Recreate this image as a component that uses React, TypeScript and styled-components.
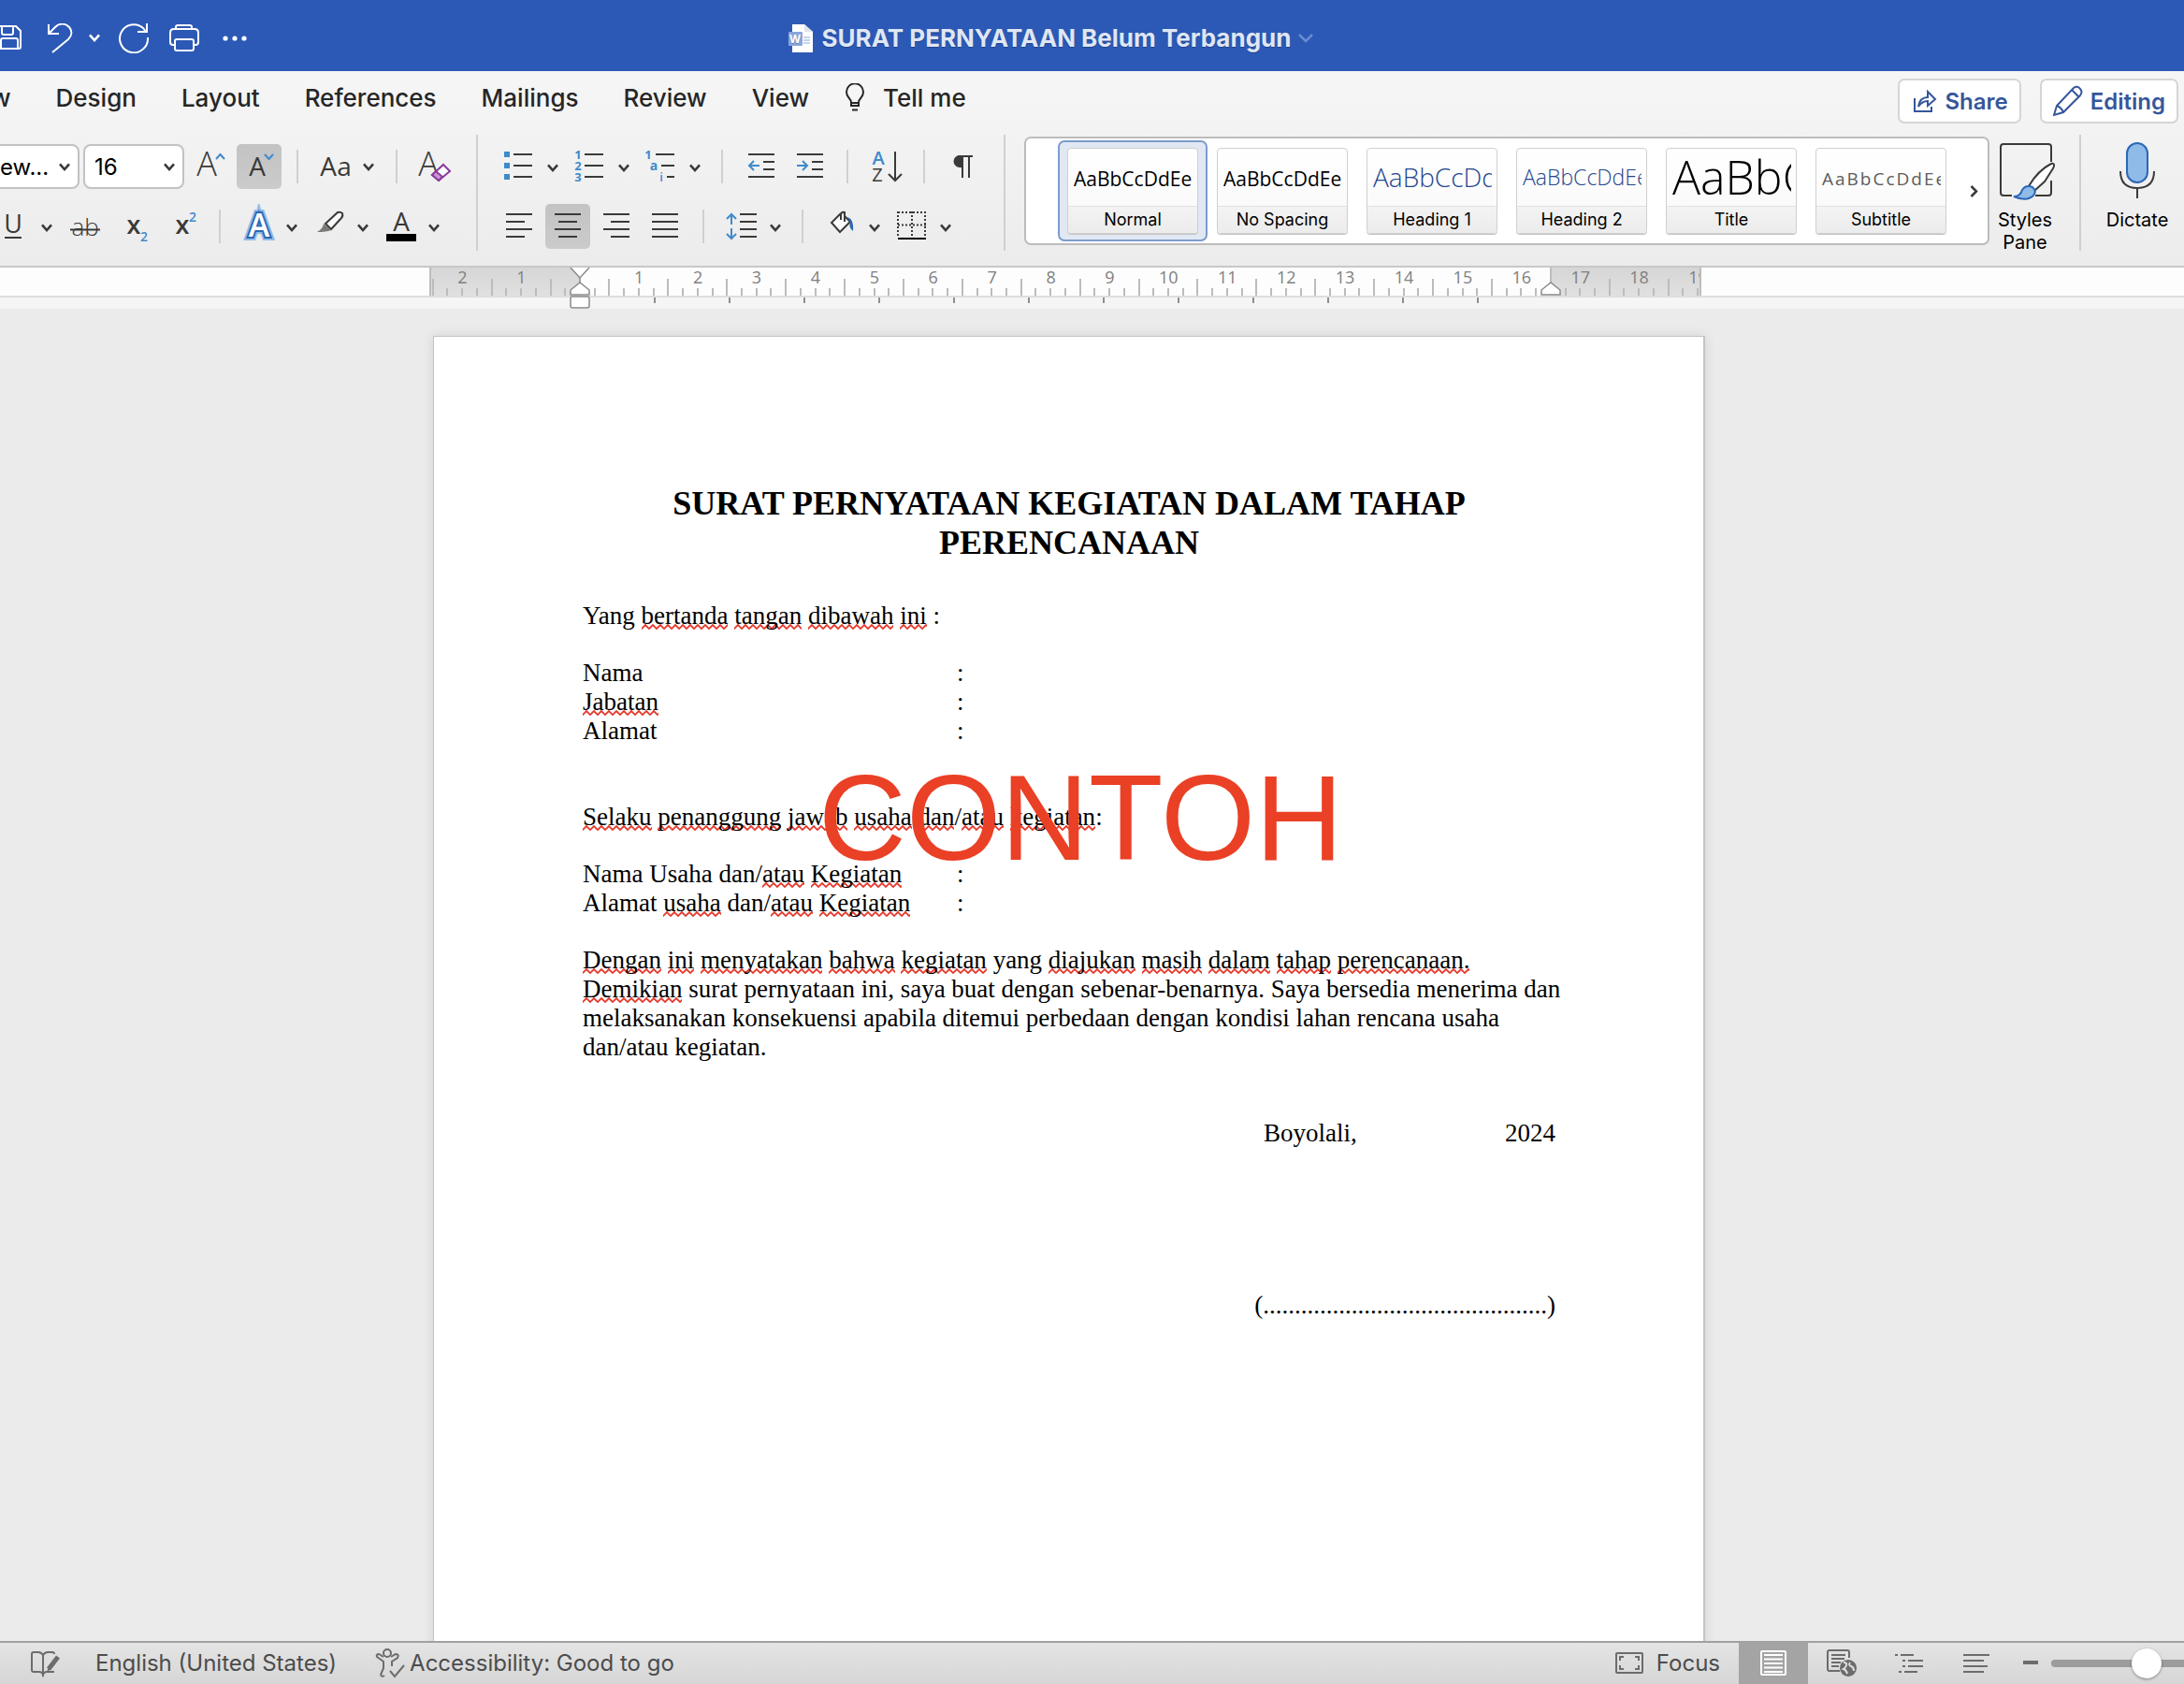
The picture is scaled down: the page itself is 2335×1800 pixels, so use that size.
import React from "react";
import styled, { createGlobalStyle } from "styled-components";

const UI = `Inter, "Liberation Sans", sans-serif`;
const SERIF = `"Liberation Serif", "Times New Roman", serif`;
const SAMPLE = `"Open Sans", "Noto Sans", sans-serif`;

const INK = "#3a3a38";
const BLUE = "#3f8acb";
const NAVY = "#35569b";

const GlobalStyle = createGlobalStyle`
  *, *::before, *::after { box-sizing: border-box; }
  body { margin: 0; background: #ebebeb; font-family: ${UI}; overflow: hidden; }
  button, select, input { font: inherit; color: inherit; margin: 0; }
  button { padding: 0; border: 0; background: none; }
  svg { display: block; flex: none; }
`;

const Window = styled.div`
  display: flex;
  flex-direction: column;
  height: 100vh;
  overflow: hidden;
`;

/* ---------- title bar ---------- */

const TitleBar = styled.header`
  display: grid;
  grid-template-columns: 1fr auto 1fr;
  align-items: center;
  height: 76px;
  padding: 5px 90px 0 0;
  flex: none;
  background: #2c59b6;
  color: #fff;
`;

const QuickTools = styled.div`
  display: flex;
  align-items: center;
  gap: 20px;
  margin-left: -6px;
`;

const UndoGroup = styled.div`
  display: flex;
  align-items: center;
  gap: 17px;
`;

const PlainButton = styled.button`
  display: flex;
  align-items: center;
  justify-content: center;
`;

const DocTitle = styled.h1`
  display: flex;
  align-items: center;
  margin: 0;
  gap: 8px;
  font-size: 26px;
  line-height: 32px;
  font-weight: 700;
  color: #dfe6f4;
  text-shadow: 0 1px 1px rgba(0, 0, 0, 0.25);
`;

/* ---------- ribbon ---------- */

const Ribbon = styled.section`
  flex: none;
  background: linear-gradient(#f6f6f6, #ececec);
  border-bottom: 2px solid #c8c8c8;
`;

const TabRow = styled.div`
  display: flex;
  align-items: flex-start;
  justify-content: space-between;
  padding: 8px 6px 0 0;
`;

const Tabs = styled.nav`
  display: flex;
  margin-left: -34px;
`;

const Tab = styled.button<{ $lead?: number }>`
  display: flex;
  align-items: center;
  gap: 20px;
  padding: 0 24px 0 ${(p) => p.$lead ?? 24}px;
  font-size: 26px;
  line-height: 42px;
  font-weight: 500;
  color: #262626;
`;

const Actions = styled.div`
  display: flex;
  gap: 20px;
`;

const ActionButton = styled.button`
  display: flex;
  align-items: center;
  justify-content: center;
  gap: 8px;
  height: 48px;
  padding: 0 12px;
  border: 2px solid #d5d5d5;
  border-radius: 7px;
  background: #fff;
  color: ${NAVY};
  font-size: 24px;
  font-weight: 600;
`;

const RibbonBody = styled.div`
  display: flex;
  align-items: flex-start;
  padding: 12px 10px 13px 0;
`;

const Group = styled.div`
  display: flex;
  flex-direction: column;
  gap: 16px;
  padding: 10px 20px 0 0;
`;

const ToolRow = styled.div<{ $pull?: boolean }>`
  display: flex;
  align-items: center;
  height: 48px;
  gap: 4px;
  margin-left: ${(p) => (p.$pull ? "-10px" : "0")};
`;

const GroupRule = styled.div`
  width: 2px;
  height: 124px;
  margin-right: 20px;
  flex: none;
  background: #d0d0d0;
`;

const Rule = styled.div`
  width: 2px;
  height: 36px;
  margin: 0 12px;
  background: #d0d0d0;
`;

const Tool = styled.button<{ $wide?: boolean; $on?: boolean }>`
  display: flex;
  align-items: center;
  justify-content: center;
  gap: 12px;
  width: ${(p) => (p.$wide ? 72 : 48)}px;
  height: 48px;
  border-radius: 5px;
  background: ${(p) => (p.$on ? "linear-gradient(#c3c3c3, #cbcbcb)" : "none")};
`;

const Split = styled.div`
  display: flex;
`;

const DropButton = styled.button`
  display: flex;
  align-items: center;
  justify-content: center;
  width: 24px;
  height: 48px;
  padding-top: 2px;
`;

const SelectBox = styled.label<{ $cut?: boolean }>`
  display: grid;
  grid-template-columns: 1fr 20px;
  align-items: center;
  width: ${(p) => (p.$cut ? 85 : 108)}px;
  height: 48px;
  border: 2px solid #c2c2c2;
  border-left-width: ${(p) => (p.$cut ? 0 : 2)}px;
  border-radius: ${(p) => (p.$cut ? "0 8px 8px 0" : "8px")};
  background: #fff;

  select {
    grid-area: 1 / 1 / 2 / 3;
    appearance: none;
    width: 100%;
    height: 44px;
    padding: 0 0 0 ${(p) => (p.$cut ? 0 : 10)}px;
    border: 0;
    background: none;
    font-size: 24px;
    color: #000;
  }

  svg {
    grid-area: 1 / 2;
    pointer-events: none;
  }
`;

const Gallery = styled.div`
  display: flex;
  flex: 1;
  justify-content: space-between;
  height: 116px;
  margin-top: 2px;
  padding: 2px 0 0 34px;
  border: 2px solid #bcbcbc;
  border-radius: 7px;
  background: #fff;
`;

const GalleryList = styled.div`
  display: flex;
`;

const StyleCell = styled.button<{ $on?: boolean }>`
  width: 160px;
  height: 108px;
  padding: 6px 8px;
  border: 2px solid ${(p) => (p.$on ? "#7c9ccd" : "transparent")};
  border-radius: 7px;
  background: ${(p) => (p.$on ? "#e1e8f3" : "none")};
`;

const StyleCard = styled.span`
  display: flex;
  flex-direction: column;
  height: 92px;
  border: 1px solid #cfcfcf;
  border-radius: 4px;
  box-shadow: 0 1px 0 #c4c4c4;
  background: linear-gradient(#fff, #f8f8f8);
  overflow: hidden;
`;

const Sample = styled.span<{ $size: number; $color: string; $spaced?: boolean }>`
  display: block;
  height: 61px;
  margin: 0 5px 0 6px;
  overflow: hidden;
  white-space: nowrap;
  text-align: left;
  font-family: ${SAMPLE};
  font-size: ${(p) => p.$size}px;
  font-weight: ${(p) => (p.$size > 21 ? 300 : 400)};
  line-height: ${(p) => (p.$size > 21 ? 60 : 64)}px;
  letter-spacing: ${(p) => (p.$spaced ? "2px" : "normal")};
  color: ${(p) => p.$color};
`;

const StyleName = styled.span`
  display: block;
  flex: 1;
  border-top: 1px solid #e2e2e2;
  background: linear-gradient(#f3f3f3, #ececec);
  font-size: 18px;
  line-height: 28px;
  text-align: center;
  color: #000;
`;

const MoreButton = styled(PlainButton)`
  width: 30px;
  height: 108px;
`;

const BigTool = styled.button<{ $narrow?: boolean }>`
  display: flex;
  flex-direction: column;
  align-items: center;
  width: ${(p) => (p.$narrow ? 76 : 80)}px;
  margin-right: ${(p) => (p.$narrow ? 20 : 0)}px;
  padding-top: 6px;
  gap: 7px;
  font-size: 20px;
  line-height: 24px;
  color: #000;
`;

/* ---------- ruler ---------- */

const RulerBar = styled.div`
  display: flex;
  justify-content: center;
  flex: none;
  height: 44px;
  padding-right: 57px;
  background: linear-gradient(#fdfdfd 30px, #dedede 30px, #dedede 32px, #f5f5f5 32px);
`;

const Ruler = styled.div`
  position: relative;
  width: 1360px;
  height: 44px;
  overflow: hidden;
  flex: none;
`;

const RulerScale = styled.div`
  display: grid;
  grid-template-columns: 161px 1038px 161px;
  height: 30px;
`;

const Band = styled.div<{ $margin?: boolean }>`
  background: ${(p) => (p.$margin ? "linear-gradient(#d6d6d6, #e0e0e0)" : "transparent")};
`;

const RulerDrawing = styled.svg`
  position: absolute;
  left: 0;
  top: 0;
`;

const RulerNumbers = styled.ol`
  position: absolute;
  left: 4px;
  top: 0;
  width: 1384px;
  display: grid;
  grid-template-columns: repeat(22, 1fr);
  margin: 0;
  padding: 0;
  list-style: none;
  font-family: ${SAMPLE};
  font-size: 18px;
  line-height: 20px;
  text-align: center;
  color: #808080;
`;

/* ---------- document ---------- */

const Canvas = styled.main`
  display: flex;
  justify-content: center;
  flex: 1;
  min-height: 0;
  padding: 29px 49px 0 0;
  overflow: hidden;
  background: #ebebeb;
`;

const Page = styled.article`
  position: relative;
  flex: none;
  width: 1360px;
  height: 1760px;
  padding: 157px 158px 0 159px;
  border: 1px solid #c4c4c4;
  border-right-width: 2px;
  background: #fff;
  box-shadow: 0 0 12px rgba(0, 0, 0, 0.1);
  font-family: ${SERIF};
  font-size: 27px;
  line-height: 31px;
  color: #000;
`;

const Heading = styled.h2`
  margin: 0 0 42px;
  font-size: 36px;
  line-height: 42px;
  font-weight: 700;
  text-align: center;
`;

const Para = styled.p<{ $after?: number }>`
  margin: 0 0 ${(p) => p.$after ?? 0}px;
  white-space: nowrap;
`;

const Fields = styled.dl<{ $after: number }>`
  display: grid;
  grid-template-columns: 400px 1fr;
  margin: 0 0 ${(p) => p.$after}px;

  dt, dd { margin: 0; }
`;

const Misspelt = styled.span`
  background: url("data:image/svg+xml,%3Csvg xmlns='http://www.w3.org/2000/svg' width='8' height='6'%3E%3Cpath d='M-2 3 L0 5 L4 1 L8 5 L10 3' fill='none' stroke='%23e5392b' stroke-width='1.8'/%3E%3C/svg%3E") left bottom repeat-x;
`;

const Signature = styled.div`
  display: flex;
  flex-direction: column;
  align-items: flex-end;
  gap: 153px;
`;

const PlaceDate = styled.div`
  display: flex;
  justify-content: space-between;
  width: 312px;
`;

const Stamp = styled.div`
  position: absolute;
  left: 411px;
  top: 440px;
  font-family: "Liberation Sans", Arial, sans-serif;
  font-size: 130px;
  line-height: 148px;
  color: #ea4025;
`;

/* ---------- status bar ---------- */

const StatusBar = styled.footer`
  display: flex;
  justify-content: space-between;
  flex: none;
  height: 46px;
  border-top: 2px solid #a0a0a0;
  background: linear-gradient(#e4e4e4, #d6d6d6);
  color: #4c4c4c;
  font-size: 24px;
`;

const StatusSide = styled.div`
  display: flex;
  align-items: center;
`;

const StatusButton = styled.button<{ $gap?: number; $before?: number }>`
  display: flex;
  align-items: center;
  gap: ${(p) => p.$gap ?? 0}px;
  margin-left: ${(p) => p.$before ?? 0}px;
  line-height: 40px;
`;

const ViewButton = styled.button<{ $on?: boolean }>`
  display: flex;
  align-items: center;
  justify-content: center;
  width: ${(p) => (p.$on ? 74 : 72)}px;
  height: 44px;
  margin-left: ${(p) => (p.$on ? 20 : 0)}px;
  background: ${(p) => (p.$on ? "#a4a4a4" : "none")};
`;

const Zoom = styled.input`
  appearance: none;
  width: 142px;
  height: 36px;
  margin-left: 14px;
  background: none;

  &::-webkit-slider-runnable-track {
    height: 8px;
    border-radius: 4px 0 0 4px;
    background: #9c9c9c;
  }

  &::-webkit-slider-thumb {
    appearance: none;
    width: 32px;
    height: 32px;
    margin-top: -12px;
    border-radius: 50%;
    background: #fff;
    box-shadow: 0 1px 3px rgba(0, 0, 0, 0.4);
  }
`;

/* ---------- drawings ---------- */

const Chevron = ({ color = INK }: { color?: string }) => (
  <svg width="12" height="9" viewBox="0 0 12 9" fill="none" stroke={color} strokeWidth="2.6">
    <path d="M1 1.4 6 7 11 1.4" />
  </svg>
);

const Icon = ({ children }: { children: React.ReactNode }) => (
  <svg width="48" height="48" viewBox="0 0 48 48" fill="none" stroke={INK} strokeWidth="2">
    {children}
  </svg>
);

type GlyphProps = {
  x: number;
  y: number;
  size: number;
  color?: string;
  weight?: number;
  children: string;
};

const Glyph = ({ x, y, size, color = INK, weight = 400, children }: GlyphProps) => (
  <text
    x={x}
    y={y}
    fontSize={size}
    fontWeight={weight}
    fontFamily="Open Sans, Noto Sans, sans-serif"
    textAnchor="middle"
    fill={color}
    stroke="none"
  >
    {children}
  </text>
);

const White = ({ w = 32, children }: { w?: number; children: React.ReactNode }) => (
  <svg width={w} height="32" viewBox={`0 0 ${w} 32`} fill="none" stroke="#fff" strokeWidth="2">
    {children}
  </svg>
);

const SplitTool = ({ label, children }: { label: string; children: React.ReactNode }) => (
  <Split>
    <Tool aria-label={label}>
      <Icon>{children}</Icon>
    </Tool>
    <DropButton aria-label={`${label} options`}>
      <Chevron />
    </DropButton>
  </Split>
);

const LINE_YS = [11, 19, 27, 35];

const AlignLines = ({ spans }: { spans: [number, number][] }) => (
  <path
    d={LINE_YS.map((y, i) => `M${spans[i % 2][0]} ${y}H${spans[i % 2][1]}`).join("")}
  />
);

/* ---------- ruler data ---------- */

const UNIT = 62.9;
const ORIGIN = 161;
const MARKS = Array.from({ length: 87 }, (_, i) => i - 10).filter((q) => q !== 0 && q !== 66);
const NUMBERS = Array.from({ length: 22 }, (_, i) => i - 2);
const TAB_STOPS = Array.from({ length: 12 }, (_, i) => i + 1);

const markPath = (tall: boolean) =>
  MARKS.filter((q) => (Math.abs(q) % 4 === 2) === tall)
    .map((q) => `M${Math.round(ORIGIN + (q * UNIT) / 4)} ${tall ? 12 : 22}V30`)
    .join("");

const STYLES = [
  { name: "Normal", size: 21, color: "#000" },
  { name: "No Spacing", size: 21, color: "#000" },
  { name: "Heading 1", size: 28, color: "#24468f" },
  { name: "Heading 2", size: 23, color: "#24468f" },
  { name: "Title", size: 50, color: "#000" },
  { name: "Subtitle", size: 19, color: "#5c5c5c", spaced: true },
];

/* Text between tildes carries the spell-check squiggle. */
const Spell = ({ children }: { children: string }) => (
  <>
    {children.split("~").map((part, i) => (i % 2 ? <Misspelt key={i}>{part}</Misspelt> : part))}
  </>
);

export default function App() {
  return (
    <Window>
      <GlobalStyle />
      <TitleBar>
        <QuickTools>
          <PlainButton aria-label="Save">
            <White>
              <path d="M2 3H23l5 5V25a2 2 0 0 1-2 2H4a2 2 0 0 1-2-2Z M8 3v7q0 2 2 2h8q2 0 2-2V3 M7 27V18q0-2 2-2H23q2 0 2 2v9" />
            </White>
          </PlainButton>
          <UndoGroup>
            <PlainButton aria-label="Undo">
              <White>
                <path d="M6 1V11H17 M6 11 13 4C18-1 24 0 28 4c3.500 4 3 9-1 13L10 31" />
              </White>
            </PlainButton>
            <PlainButton aria-label="Undo history">
              <Chevron color="#fff" />
            </PlainButton>
          </UndoGroup>
          <PlainButton aria-label="Redo">
            <White>
              <path d="M31 15A15 15 0 1 1 26 5L29 9 M30 0V9H20" />
            </White>
          </PlainButton>
          <PlainButton aria-label="Print">
            <White w={34}>
              <path d="M9 6V4q0-2 2-2H24q2 0 2 2V6 M8 23H6q-3 0-3-3V10q0-4 4-4H29q4 0 4 4V20q0 3-3 3H28 M10 17H26q2 0 2 2v8q0 2-2 2H10q-2 0-2-2V19q0-2 2-2Z" />
            </White>
          </PlainButton>
          <PlainButton aria-label="More">
            <White>
              <g fill="#fff" stroke="none">
                <circle cx="8" cy="16" r="2.600" />
                <circle cx="18" cy="16" r="2.600" />
                <circle cx="28" cy="16" r="2.600" />
              </g>
            </White>
          </PlainButton>
        </QuickTools>
        <DocTitle>
          <svg width="30" height="30" viewBox="0 0 30 30">
            <path d="M6 0H19L28 8V30H6Z" fill="#fff" />
            <path d="M19 0V8H28Z" fill="#dfe3ec" />
            <path d="M18 14h7M18 17h7M18 20h7" stroke="#8aa5dc" strokeWidth="1" />
            <rect x="2" y="8" width="15" height="15" rx="1" fill="#8aa5dc" />
            <text x="9" y="20" fontSize="12" fontWeight="700" fill="#fff" textAnchor="middle">
              W
            </text>
          </svg>
          SURAT PERNYATAAN Belum Terbangun
          <svg width="16" height="10" viewBox="0 0 16 10" fill="none" stroke="#6c8bcf" strokeWidth="2.500">
            <path d="M1 1 8 8 15 1" />
          </svg>
        </DocTitle>
      </TitleBar>

      <Ribbon>
        <TabRow>
          <Tabs>
            <Tab>w</Tab>
            <Tab>Design</Tab>
            <Tab>Layout</Tab>
            <Tab>References</Tab>
            <Tab>Mailings</Tab>
            <Tab>Review</Tab>
            <Tab>View</Tab>
            <Tab $lead={15}>
              <svg width="20" height="32" viewBox="0 0 20 32" fill="none" stroke="#262626" strokeWidth="2">
                <path d="M6 24V21Q6 18 3.500 15.500A9 9 0 1 1 16.500 15.500Q14 18 14 21V24Z M6 21H14 M7 28.500H13" />
              </svg>
              Tell me
            </Tab>
          </Tabs>
          <Actions>
            <ActionButton>
              <svg width="28" height="28" viewBox="0 0 28 28" fill="none" stroke={NAVY} strokeWidth="2">
                <path d="M4 11V25H22V20" />
                <path d="M8 20C9 13 13 10 18 10V4L26 12 18 19V14Q12 14 8 20Z" />
              </svg>
              Share
            </ActionButton>
            <ActionButton>
              <svg width="32" height="34" viewBox="0 0 32 34" fill="none" stroke={NAVY} strokeWidth="2">
                <path d="M1 32 4 22 22 3Q26 0 29 4 32 7 29 11L11 29Z M4 22Q9 24 11 29 M20 5 28 13" />
              </svg>
              Editing
            </ActionButton>
          </Actions>
        </TabRow>

        <RibbonBody>
          <Group>
            <ToolRow>
              <SelectBox $cut>
                <select aria-label="Font">
                  <option>ew...</option>
                </select>
                <Chevron />
              </SelectBox>
              <SelectBox>
                <select aria-label="Font size">
                  <option>16</option>
                </select>
                <Chevron />
              </SelectBox>
              <Tool aria-label="Increase font size">
                <Icon>
                  <Glyph x={20} y={34} size={36} weight={300}>A</Glyph>
                  <path d="M30 16 34.500 11 39 16" stroke={BLUE} />
                </Icon>
              </Tool>
              <Tool $on aria-label="Decrease font size">
                <Icon>
                  <Glyph x={22} y={34} size={28}>A</Glyph>
                  <path d="M30 11 34.500 16 39 11" stroke={BLUE} />
                </Icon>
              </Tool>
              <Rule />
              <Tool $wide aria-label="Change case">
                <svg width="34" height="48" viewBox="0 0 34 48">
                  <Glyph x={9} y={34} size={28}>A</Glyph>
                  <Glyph x={26} y={34} size={28}>a</Glyph>
                </svg>
                <Chevron />
              </Tool>
              <Rule />
              <Tool aria-label="Clear formatting">
                <Icon>
                  <Glyph x={17} y={34} size={36} weight={300}>A</Glyph>
                  <path d="M33 22 40 29 28 39 21 33Z" fill="#fff" stroke="#8a3a9c" />
                  <path d="M25 29 32 35 28 39 21 33Z" fill="#c79ad2" stroke="#8a3a9c" />
                </Icon>
              </Tool>
            </ToolRow>
            <ToolRow $pull>
              <SplitTool label="Underline">
                <Glyph x={24} y={31} size={27}>U</Glyph>
                <path d="M15 36H33" />
              </SplitTool>
              <Tool aria-label="Strikethrough">
                <Icon>
                  <Glyph x={25} y={34} size={26} weight={300}>ab</Glyph>
                  <path d="M9 27.500H41" />
                </Icon>
              </Tool>
              <Tool aria-label="Subscript">
                <Icon>
                  <Glyph x={25} y={32} size={27} weight={600}>x</Glyph>
                  <Glyph x={36} y={40} size={14} weight={600} color={BLUE}>2</Glyph>
                </Icon>
              </Tool>
              <Tool aria-label="Superscript">
                <Icon>
                  <Glyph x={25} y={32} size={27} weight={600}>x</Glyph>
                  <Glyph x={36} y={19} size={14} weight={600} color={BLUE}>2</Glyph>
                </Icon>
              </Tool>
              <Rule />
              <SplitTool label="Text effects">
                <text x="25" y="35" fontSize="34" fontWeight="600" fontFamily="Open Sans" textAnchor="middle" fill="#fff" stroke="#8fbbe8" strokeWidth="8" paintOrder="stroke">
                  A
                </text>
                <text x="25" y="35" fontSize="34" fontWeight="600" fontFamily="Open Sans" textAnchor="middle" fill="#fff" stroke="#2b67b5" strokeWidth="4" paintOrder="stroke">
                  A
                </text>
              </SplitTool>
              <SplitTool label="Highlight">
                <path d="M20 21 33 9Q36 8 38 10 39 13 37 15L26 27Z" fill="#fafafa" />
                <path d="M18 21 26 28Q21 30 11 30 17 27 18 21Z" fill="#7c7a78" stroke="none" />
              </SplitTool>
              <SplitTool label="Font colour">
                <Glyph x={25} y={29} size={28}>A</Glyph>
                <path d="M9 36H41" stroke="#000" strokeWidth="8" />
              </SplitTool>
            </ToolRow>
          </Group>
          <GroupRule />
          <Group>
            <ToolRow>
              <SplitTool label="Bullets">
                <path d="M8 11h6M8 23h6M8 35h6" stroke={BLUE} strokeWidth="6" />
                <path d="M18 11H38M18 23H38M18 35H38" />
              </SplitTool>
              <SplitTool label="Numbering">
                <Glyph x={11} y={16} size={13} weight={700} color={BLUE}>1</Glyph>
                <Glyph x={11} y={28} size={13} weight={700} color={BLUE}>2</Glyph>
                <Glyph x={11} y={40} size={13} weight={700} color={BLUE}>3</Glyph>
                <path d="M18 11H38M18 23H38M18 35H38" />
              </SplitTool>
              <SplitTool label="Multilevel list">
                <Glyph x={10} y={16} size={13} weight={700} color={BLUE}>1</Glyph>
                <Glyph x={16} y={28} size={14} weight={700} color={BLUE}>a</Glyph>
                <Glyph x={24} y={40} size={13} weight={600} color={BLUE}>i</Glyph>
                <path d="M18 11H38M24 23H38M30 35H38" />
              </SplitTool>
              <Rule />
              <Tool aria-label="Decrease indent">
                <Icon>
                  <path d="M11 11H39M27 19H39M27 27H39M11 35H39" />
                  <path d="M12 23H23M17 18 12 23 17 28" stroke={BLUE} />
                </Icon>
              </Tool>
              <Tool aria-label="Increase indent">
                <Icon>
                  <path d="M11 11H39M27 19H39M27 27H39M11 35H39" />
                  <path d="M11 23H22M17 18 22 23 17 28" stroke={BLUE} />
                </Icon>
              </Tool>
              <Rule />
              <Tool aria-label="Sort">
                <Icon>
                  <Glyph x={16} y={22} size={20} weight={600} color={BLUE}>A</Glyph>
                  <Glyph x={15} y={40} size={20}>Z</Glyph>
                  <path d="M34 8V39M27 32 34 39 41 32" />
                </Icon>
              </Tool>
              <Rule />
              <Tool aria-label="Show paragraph marks">
                <Icon>
                  <path d="M24 12H21a6.500 6.500 0 0 0 0 13H24Z" fill={INK} stroke="none" />
                  <path d="M19 13H35M24 12V36M31 12V36" />
                </Icon>
              </Tool>
            </ToolRow>
            <ToolRow>
              <Tool aria-label="Align left">
                <Icon><AlignLines spans={[[10, 38], [10, 30]]} /></Icon>
              </Tool>
              <Tool $on aria-label="Centre">
                <Icon><AlignLines spans={[[10, 38], [14, 34]]} /></Icon>
              </Tool>
              <Tool aria-label="Align right">
                <Icon><AlignLines spans={[[10, 38], [18, 38]]} /></Icon>
              </Tool>
              <Tool aria-label="Justify">
                <Icon><AlignLines spans={[[10, 38], [10, 38]]} /></Icon>
              </Tool>
              <Rule />
              <SplitTool label="Line spacing">
                <path d="M22 11H40M22 19H40M22 27H40M22 35H40" />
                <path d="M13 11V22M8 16 13 11 18 16M13 26V37M8 32 13 37 18 32" stroke={BLUE} />
              </SplitTool>
              <Rule />
              <SplitTool label="Shading">
                <path d="M24 10 14 20 23 30 34 19 28 13" fill="#fafafa" />
                <path d="M24 17V11Q25 8 28 9V19" />
                <path d="M30 14Q38 15 37 29 32 25 34 19Z" fill="#2c66b4" stroke="none" />
              </SplitTool>
              <SplitTool label="Borders">
                <path d="M9 9H39M9 22.500H39M9 8V34M24 8V34M38 8V34" strokeDasharray="2 2" />
                <path d="M9 37H39" stroke="#000" />
              </SplitTool>
            </ToolRow>
          </Group>
          <GroupRule />
          <Gallery>
            <GalleryList>
              {STYLES.map((s, i) => (
                <StyleCell key={s.name} $on={i === 0}>
                  <StyleCard>
                    <Sample $size={s.size} $color={s.color} $spaced={s.spaced}>
                      AaBbCcDdEe
                    </Sample>
                    <StyleName>{s.name}</StyleName>
                  </StyleCard>
                </StyleCell>
              ))}
            </GalleryList>
            <MoreButton aria-label="More styles">
              <svg width="9" height="13" viewBox="0 0 9 13" fill="none" stroke={INK} strokeWidth="2.500">
                <path d="M1.500 1 7 6.500 1.500 12" />
              </svg>
            </MoreButton>
          </Gallery>
          <BigTool $narrow>
            <svg width="64" height="66" viewBox="0 0 64 66" fill="none" stroke={INK} strokeWidth="2">
              <path d="M18 59H9q-3 0-3-3V7q0-3 3-3H57q3 0 3 3V23 M60 43V56q0 3-3 3H43" />
              <path d="M36 49Q46 32 60 25 65 24 62 30L53 44 42 54Z" fill="#fff" />
              <path d="M20 60Q27 60 29 53 33 47 40 50 45 54 41 59 34 66 20 60Z" fill="#8fbbe8" stroke="#2b67b5" />
            </svg>
            Styles
            <br />
            Pane
          </BigTool>
          <GroupRule />
          <BigTool>
            <svg width="40" height="66" viewBox="0 0 40 66" fill="none" stroke={INK} strokeWidth="2">
              <rect x="9" y="3" width="22" height="42" rx="11" fill="#8fbbe8" stroke="#2b67b5" />
              <path d="M2 33Q2 51 20 51T38 33M20 51V62" />
            </svg>
            Dictate
          </BigTool>
        </RibbonBody>
      </Ribbon>

      <RulerBar>
        <Ruler>
          <RulerScale>
            <Band $margin />
            <Band />
            <Band $margin />
          </RulerScale>
          <RulerNumbers>
            {NUMBERS.map((n) => (
              <li key={n}>{n === 0 ? "" : Math.abs(n)}</li>
            ))}
          </RulerNumbers>
          <RulerDrawing width="1360" height="44" viewBox="0 0 1360 44" fill="none">
            <path d="M1 0V30M1359 0V30M1199 0V20" stroke="#bdbdbd" strokeWidth="2" />
            <path d={markPath(true) + markPath(false)} stroke="#bcbcbc" strokeWidth="2" />
            <path d={TAB_STOPS.map((k) => `M${ORIGIN + k * 80} 32V38`).join("")} stroke="#8f8f8f" strokeWidth="2" />
            <g fill="#fff" stroke="#8a8a8a" strokeWidth="1.500">
              <path d="M151 0 161 11 171 0" />
              <path d="M161 11V16" />
              <path d="M151 29V24L161 16 171 24V29Z" />
              <rect x="151" y="31" width="20" height="12" rx="2" />
              <path d="M1189 29V24L1199 16 1209 24V29Z" />
            </g>
          </RulerDrawing>
        </Ruler>
      </RulerBar>

      <Canvas>
        <Page>
          <Heading>SURAT PERNYATAAN KEGIATAN DALAM TAHAP PERENCANAAN</Heading>
          <Para $after={30}>
            <Spell>Yang ~bertanda~ ~tangan~ ~dibawah~ ~ini~ :</Spell>
          </Para>
          <Fields $after={61}>
            <dt>Nama</dt>
            <dd>:</dd>
            <dt><Spell>~Jabatan~</Spell></dt>
            <dd>:</dd>
            <dt>Alamat</dt>
            <dd>:</dd>
          </Fields>
          <Para $after={30}>
            <Spell>~Selaku~ ~penanggung~ ~jawab~ ~usaha~ ~dan~/~atau~ ~kegiatan~:</Spell>
          </Para>
          <Fields $after={30}>
            <dt><Spell>Nama Usaha dan/~atau~ ~Kegiatan~</Spell></dt>
            <dd>:</dd>
            <dt><Spell>Alamat ~usaha~ dan/~atau~ ~Kegiatan~</Spell></dt>
            <dd>:</dd>
          </Fields>
          <Para>
            <Spell>~Dengan~ ~ini~ ~menyatakan~ ~bahwa~ ~kegiatan~ yang ~diajukan~ ~masih~ ~dalam~ ~tahap~ ~perencanaan.~</Spell>
          </Para>
          <Para $after={61}>
            <Misspelt>Demikian</Misspelt> surat pernyataan ini, saya buat dengan sebenar-benarnya. Saya bersedia menerima dan
            <br />
            melaksanakan konsekuensi apabila ditemui perbedaan dengan kondisi lahan rencana usaha
            <br />
            dan/atau kegiatan.
          </Para>
          <Signature>
            <PlaceDate>
              <span>Boyolali,</span>
              <span>2024</span>
            </PlaceDate>
            <span>(.............................................)</span>
          </Signature>
          <Stamp>CONTOH</Stamp>
        </Page>
      </Canvas>

      <StatusBar>
        <StatusSide>
          <StatusButton aria-label="Proofing" $before={32}>
            <svg width="34" height="30" viewBox="0 0 34 30" fill="none" stroke="#6c6c6c" strokeWidth="2">
              <path d="M14 6Q12 3 9 3H4Q2 3 2 5V22Q2 24 4 24H10Q13 24 14 27 15 24 18 24H26 M14 6V29 M14 6Q16 3 19 3H24Q26 3 26 5" />
              <path d="M20 21 30 8" strokeWidth="5" />
              <path d="M18 24 20 19 23 21Z" fill="#6c6c6c" stroke="none" />
            </svg>
          </StatusButton>
          <StatusButton $before={36}>English (United States)</StatusButton>
          <StatusButton $before={41} $gap={5}>
            <svg width="32" height="32" viewBox="0 0 32 32" fill="none" stroke="#6c6c6c" strokeWidth="2">
              <circle cx="13" cy="5" r="4" />
              <path d="M9 9 4 6Q1 6 2 9L9 14V21L6 28Q7 31 10 29 M17 9 22 6Q26 6 24 10L18 14V19 M16 24 21 30 31 18" />
            </svg>
            Accessibility: Good to go
          </StatusButton>
        </StatusSide>
        <StatusSide>
          <StatusButton $gap={14}>
            <svg width="30" height="24" viewBox="0 0 30 24" fill="none" stroke="#6c6c6c" strokeWidth="2">
              <rect x="1" y="1" width="28" height="21" rx="1" />
              <path d="M5 9V5H9M21 5H25V9M25 14V18H21M9 18H5V14" />
            </svg>
            Focus
          </StatusButton>
          <ViewButton $on aria-label="Print layout">
            <svg width="28" height="28" viewBox="0 0 28 28" fill="none" stroke="#fff" strokeWidth="2">
              <rect x="1" y="1" width="26" height="25" rx="1" />
              <path d="M4 5H24M4 9.500H24M4 14H24M4 18.500H24M4 23H24" />
            </svg>
          </ViewButton>
          <ViewButton aria-label="Web layout">
            <svg width="32" height="30" viewBox="0 0 32 30" fill="none" stroke="#6c6c6c" strokeWidth="2">
              <path d="M14 23H3q-2 0-2-2V3q0-2 2-2H22q2 0 2 2V9 M5 6H20M5 10H19M5 14H15M5 18H13" />
              <circle cx="23" cy="20" r="9" fill="#6c6c6c" stroke="none" />
              <path d="M18 14q4 0 3 3t-3 4q3 1 4 5M25 14q-2 3 1 4t3 5" stroke="#ddd" />
            </svg>
          </ViewButton>
          <ViewButton aria-label="Outline">
            <svg width="32" height="24" viewBox="0 0 32 24" fill="none" stroke="#6c6c6c" strokeWidth="2">
              <path d="M1 3h3M7 3H21M9 9h3M15 9H31M9 15h3M15 15H31M5 21h3M11 21H25" />
            </svg>
          </ViewButton>
          <ViewButton aria-label="Draft">
            <svg width="28" height="24" viewBox="0 0 28 24" fill="none" stroke="#6c6c6c" strokeWidth="2">
              <path d="M0 3H28M0 9H22M0 15H26M0 21H22" />
            </svg>
          </ViewButton>
          <StatusButton aria-label="Zoom out" $before={14}>
            <svg width="16" height="10" viewBox="0 0 16 10">
              <path d="M0 4H16" stroke="#6c6c6c" strokeWidth="4" />
            </svg>
          </StatusButton>
          <Zoom type="range" aria-label="Zoom" min={0} max={100} defaultValue={78} />
        </StatusSide>
      </StatusBar>
    </Window>
  );
}
